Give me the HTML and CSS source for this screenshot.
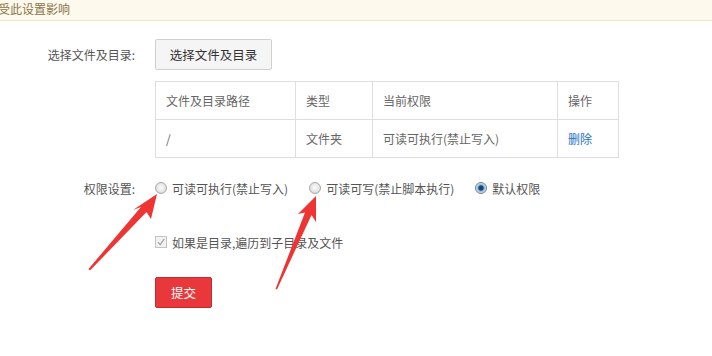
FILE: index.html
```html
<!DOCTYPE html>
<html lang="zh-CN">
<head>
<meta charset="utf-8">
<link rel="stylesheet" href="styles.css">
</head>
<body>
<div class="page">
  <div class="notice"><span class="notice-text">不受此设置影响</span></div>
  <form class="form">
    <div class="row row-select">
      <span class="label">选择文件及目录:</span>
      <span class="btn">选择文件及目录</span>
    </div>
    <table class="tbl">
      <colgroup>
        <col class="c1"><col class="c2"><col class="c3"><col class="c4">
      </colgroup>
      <tr><td>文件及目录路径</td><td>类型</td><td>当前权限</td><td>操作</td></tr>
      <tr><td>/</td><td>文件夹</td><td>可读可执行(禁止写入)</td><td><a class="link">删除</a></td></tr>
    </table>
    <div class="row row-perm">
      <span class="label">权限设置:</span>
      <span class="opt"><span class="radio"></span>可读可执行(禁止写入)</span>
      <span class="opt"><span class="radio"></span>可读可写(禁止脚本执行)</span>
      <span class="opt"><span class="radio on"></span>默认权限</span>
    </div>
    <div class="row row-check">
      <span class="label"></span>
      <span class="opt"><span class="check"><svg width="10" height="10" viewBox="0 0 10 10"><path d="M2 5.2 L4.2 7.6 L8.2 1.8" fill="none" stroke="#a9a9a9" stroke-width="1.3"/></svg></span>如果是目录,遍历到子目录及文件</span>
    </div>
    <div class="row row-submit">
      <span class="label"></span>
      <span class="submit">提交</span>
    </div>
  </form>
  <svg class="arrows" width="712" height="356" viewBox="0 0 712 356">
    <polygon fill="#ef3434" points="157,194 151,219 146.5,212 90,270.5 88.5,269 141,207 133,210"/>
    <polygon fill="#ef3434" points="316,196 316,222 311.5,215 277,289.5 275.5,289 305,212.5 298,214"/>
  </svg>
</div>
</body>
</html>
```
FILE: styles.css
```css
html, body {
  margin: 0;
  padding: 0;
  background: #fff;
}
.page {
  position: relative;
  width: 712px;
  height: 356px;
  overflow: hidden;
  font-family: "Noto Sans CJK SC", "Noto Sans", sans-serif;
  font-size: 12px;
  color: #555;
}
.notice {
  height: 20px;
  background: #fdf9ec;
  border-bottom: 1px solid #f3e5bd;
  overflow: hidden;
  line-height: 17px;
  color: #8c7447;
  font-size: 12px;
}
.notice-text {
  display: block;
  margin-left: -14px;
  white-space: nowrap;
}
.form {
  padding-top: 18px;
}
.row {
  display: flex;
  align-items: center;
}
.label {
  width: 135px;
  margin-right: 20px;
  text-align: right;
  flex: none;
  white-space: nowrap;
}
.btn {
  box-sizing: border-box;
  width: 117px;
  height: 31px;
  border: 1px solid #d0d0d0;
  border-radius: 2px;
  background: #f5f5f5;
  display: flex;
  align-items: center;
  justify-content: center;
  color: #333;
  font-size: 12.5px;
}
.tbl {
  margin: 11px 0 0 155px;
  border-collapse: collapse;
  table-layout: fixed;
  width: 463px;
}
.tbl .c1 { width: 140px; }
.tbl .c2 { width: 77px; }
.tbl .c3 { width: 185px; }
.tbl .c4 { width: 61px; }
.tbl td {
  border: 1px solid #dedede;
  height: 37px;
  padding: 0 0 0 10px;
  color: #666;
  white-space: nowrap;
}
.link {
  color: #1f6fc5;
}
.row-perm {
  margin-top: 20px;
  height: 20px;
}
.opt {
  display: inline-flex;
  align-items: center;
  margin-right: 21px;
  white-space: nowrap;
}
.radio {
  box-sizing: border-box;
  width: 12px;
  height: 12px;
  border-radius: 50%;
  border: 1px solid #a9a9a9;
  background: radial-gradient(circle at 50% 45%, #fafafa 0%, #e6e6e6 55%, #c9c9c9 100%);
  margin-right: 5px;
  flex: none;
}
.radio.on {
  border-color: #6a7f93;
  background: radial-gradient(circle at 50% 50%, #0f3a66 0%, #1c5286 32%, #8fb3d3 45%, #e9eef3 75%, #c2cad2 100%);
}
.row-check {
  margin-top: 34px;
  height: 20px;
}
.check {
  box-sizing: border-box;
  width: 12px;
  height: 12px;
  border: 1px solid #c3c3c3;
  background: #f2f2f2;
  margin-right: 5px;
  display: flex;
  align-items: center;
  justify-content: center;
  flex: none;
}
.row-submit {
  margin-top: 25px;
}
.submit {
  box-sizing: border-box;
  width: 57px;
  height: 31px;
  border: 1px solid #c52a2d;
  border-radius: 2px;
  background: #e8383b;
  color: #fff;
  display: flex;
  align-items: center;
  justify-content: center;
  font-size: 12.5px;
}
.arrows {
  position: absolute;
  left: 0;
  top: 0;
  pointer-events: none;
}
```
